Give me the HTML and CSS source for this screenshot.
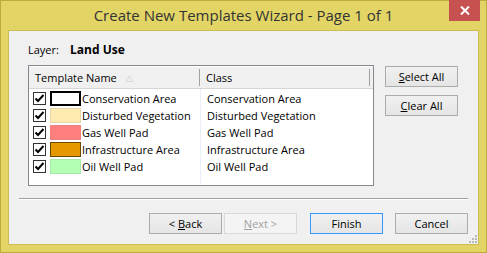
FILE: index.html
```html
<!DOCTYPE html>
<html lang="en">
    <head>
        <meta charset="UTF-8" />
        <title>Create New Templates Wizard</title>
        <link rel="stylesheet" href="styles.css">
    </head>
    <body>
        <div class="window">
            <div class="titlebar">
                <span class="title">Create New Templates Wizard - Page 1 of 1</span>
                <button class="close">
                    <svg width="10" height="9" viewBox="0 0 10 9">
                        <path d="M1 0.5 L9 8.5 M9 0.5 L1 8.5" stroke="#fff" stroke-width="2" />
                    </svg>
                </button>
            </div>
            <div class="client">
                <div class="layer">
                    <span class="layerLabel">Layer:</span>
                    <b>Land Use</b>
                </div>
                <div class="main">
                    <div class="list">
                        <div class="head">
                            <div class="col1">Template Name <span class="sort">&#9651;</span></div>
                            <div class="col2">Class</div>
                        </div>
                        <div class="rows"></div>
                    </div>
                    <div class="side">
                        <button class="btn"><u>S</u>elect All</button>
                        <button class="btn"><u>C</u>lear All</button>
                    </div>
                </div>
                <hr class="sep" />
                <div class="footer">
                    <button class="btn">&lt; <u>B</u>ack</button>
                    <button class="btn" disabled><u>N</u>ext &gt;</button>
                    <button class="btn default">Finish</button>
                    <button class="btn">Cancel</button>
                </div>
                <svg class="grip" width="9" height="9" viewBox="0 0 9 9">
                    <rect x="6" y="0" width="2" height="2" fill="#b8b8b8" />
                    <rect x="3" y="3" width="2" height="2" fill="#b8b8b8" />
                    <rect x="6" y="3" width="2" height="2" fill="#b8b8b8" />
                    <rect x="0" y="6" width="2" height="2" fill="#b8b8b8" />
                    <rect x="3" y="6" width="2" height="2" fill="#b8b8b8" />
                    <rect x="6" y="6" width="2" height="2" fill="#b8b8b8" />
                </svg>
            </div>
        </div>
        <script>
            const templates = [
                { name: 'Conservation Area', fill: '#ffffff', line: '#000000', thick: true },
                { name: 'Disturbed Vegetation', fill: '#ffebaf', line: '#e8d8a8' },
                { name: 'Gas Well Pad', fill: '#ff7f7f', line: '#f08080' },
                { name: 'Infrastructure Area', fill: '#e69800', line: '#6b4a00' },
                { name: 'Oil Well Pad', fill: '#b4ffb4', line: '#a8e8a8' }
            ]
            const rowsEl = document.querySelector('.rows')
            for (const item of templates) {
                let html = `<div class="row">
                    <div class="col1">
                        <span class="check"><svg width="11" height="11" viewBox="0 0 11 11"><path d="M1.5 5.5 L4 8 L9.5 2" fill="none" stroke="#000" stroke-width="2" /></svg></span>
                        <span class="swatch${item.thick ? ' thick' : ''}" style="background:${item.fill};border-color:${item.line}"></span>
                        <span>${item.name}</span>
                    </div>
                    <div class="col2">${item.name}</div>
                </div>`
                rowsEl.innerHTML += html
            }
        </script>
    </body>
</html>
```

FILE: styles.css
```css
body {
    margin: 0;
    font-family: "Open Sans", "Noto Sans", sans-serif;
    font-size: 11px;
    color: #000;
}
.window {
    width: 487px;
    height: 253px;
    box-sizing: border-box;
    background-color: #e2d566;
    border: 1px solid #b9ab3c;
    display: flex;
    flex-direction: column;
}
.titlebar {
    height: 29px;
    display: flex;
    position: relative;
    justify-content: center;
    align-items: center;
}
.title {
    font-size: 15px;
    color: #333;
    margin-top: -1px;
}
.close {
    position: absolute;
    top: -1px;
    right: 6px;
    width: 31px;
    height: 21px;
    border: none;
    background-color: #c75050;
    display: flex;
    align-items: center;
    justify-content: center;
    padding: 0;
}
.client {
    position: relative;
    margin: 0 7px;
    height: 215px;
    box-sizing: border-box;
    background-color: #f0f0f0;
    border: 1px solid #cbbd52;
    padding: 0 10px;
}
.layer {
    display: flex;
    align-items: center;
    padding: 10px 0 0 9px;
    height: 16px;
}
.layerLabel {
    width: 42px;
}
.layer b {
    font-size: 12px;
}
.main {
    display: flex;
    margin-top: 8px;
    padding-left: 9px;
    gap: 11px;
}
.list {
    width: 346px;
    height: 121px;
    box-sizing: border-box;
    border: 1px solid #828790;
    background-color: #fff;
}
.head {
    display: flex;
    background-color: #f0f0f0;
    border-bottom: 1px solid #d5d5d5;
    border-top: 1px solid #fff;
    box-sizing: border-box;
    height: 23px;
}
.head .col1,
.head .col2 {
    display: flex;
    align-items: center;
    padding-left: 6px;
}
.head .col1 {
    border-right: 1px solid #a0a0a0;
    margin: 2px 0;
}
.head .col2 {
    width: 170px;
    border-right: 1px solid #a0a0a0;
    margin: 2px 0;
}
.col1 {
    width: 171px;
    box-sizing: border-box;
}
.col2 {
    width: 169px;
    box-sizing: border-box;
    padding-left: 7px;
}
.sort {
    color: #c8c8c8;
    font-size: 9px;
    margin-left: 9px;
}
.rows {
    padding-top: 1px;
    position: relative;
}
.rows::after {
    content: '';
    position: absolute;
    left: 171px;
    top: 0;
    height: 95px;
    border-left: 1px solid #eaf0f8;
}
.row {
    display: flex;
    height: 17px;
    align-items: center;
}
.row .col1 {
    display: flex;
    align-items: center;
    padding-left: 4px;
}
.check {
    width: 13px;
    height: 13px;
    box-sizing: border-box;
    border: 1px solid #333;
    background-color: #fff;
    display: flex;
    align-items: center;
    justify-content: center;
    margin-right: 4px;
}
.swatch {
    width: 31px;
    height: 15px;
    box-sizing: border-box;
    border: 1px solid;
    margin-right: 1px;
}
.swatch.thick {
    border-width: 2px;
}
.side {
    display: flex;
    flex-direction: column;
    gap: 8px;
    margin-top: 1px;
}
.btn {
    width: 73px;
    height: 21px;
    box-sizing: border-box;
    border: 1px solid #acacac;
    background: linear-gradient(#f0f0f0, #e5e5e5);
    font-family: inherit;
    font-size: 11px;
    color: #000;
    padding: 0;
}
.btn:disabled {
    border-color: #d9d9d9;
    background: #f4f4f4;
    color: #a0a0a0;
}
.btn.default {
    border-color: #3399ff;
}
.sep {
    margin: 12px 0 0 0;
    border: none;
    border-top: 1px solid #a0a0a0;
    border-bottom: 1px solid #fff;
}
.footer {
    display: flex;
    justify-content: flex-end;
    margin-top: 13px;
}
.footer .btn:nth-child(2) {
    margin-left: 2px;
}
.footer .btn:nth-child(3) {
    margin-left: 13px;
}
.footer .btn:nth-child(4) {
    margin-left: 12px;
}
.grip {
    position: absolute;
    right: 0;
    bottom: 0;
}
```
